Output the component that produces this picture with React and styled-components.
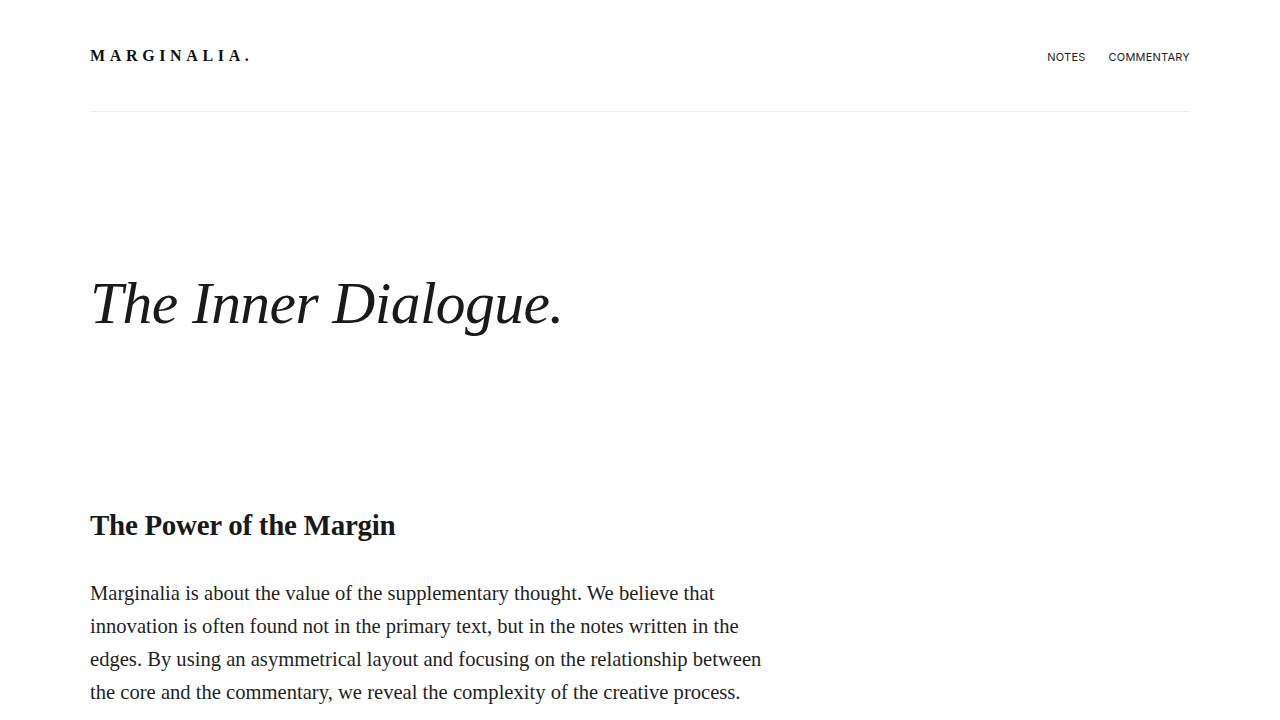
import React from 'react';
import styled, { createGlobalStyle } from 'styled-components';

const GlobalStyle = createGlobalStyle`
  html, body {
    margin: 0;
    padding: 0;
    background: #ffffff;
    color: #1a1a1a;
  }
  body {
    font-family: "Liberation Serif", "Times New Roman", serif;
  }
`;

const Page = styled.div`
  max-width: 1100px;
  margin: 0 auto;
`;

const Header = styled.header`
  display: flex;
  justify-content: space-between;
  align-items: center;
  height: 112px;
  border-bottom: 1px solid #eeeeee;
  box-sizing: border-box;
`;

const Logo = styled.div`
  font-family: "Liberation Serif", serif;
  font-weight: 700;
  font-size: 16px;
  letter-spacing: 0.29em;
  margin-top: 1px;
  color: #111;
`;

const Nav = styled.nav`
  display: flex;
  gap: 23px;
  margin-top: 3px;
`;

const NavLink = styled.a`
  font-family: Inter, "Liberation Sans", sans-serif;
  font-size: 11px;
  letter-spacing: 0.02em;
  text-transform: uppercase;
  color: #222;
  text-decoration: none;
`;

const Hero = styled.section`
  padding-top: 157px;
  padding-bottom: 170px;
`;

const Title = styled.h1`
  margin: 0;
  font-style: italic;
  font-weight: 400;
  font-size: 59.6px;
  line-height: 68px;
  letter-spacing: -0.01em;
  color: #1a1a1a;
`;

const Section = styled.section`
  max-width: 680px;
`;

const Heading = styled.h2`
  margin: 0 0 34px;
  font-weight: 700;
  font-size: 29px;
  line-height: 36px;
  letter-spacing: -0.01em;
  color: #1a1a1a;
`;

const Paragraph = styled.p`
  margin: 0;
  font-size: 20.6px;
  line-height: 33px;
  color: #1f1f1f;
`;

export default function App() {
  return (
    <>
      <GlobalStyle />
      <Page>
        <Header>
          <Logo>MARGINALIA.</Logo>
          <Nav>
            <NavLink href="#">Notes</NavLink>
            <NavLink href="#">Commentary</NavLink>
          </Nav>
        </Header>
        <Hero>
          <Title>The Inner Dialogue.</Title>
        </Hero>
        <Section>
          <Heading>The Power of the Margin</Heading>
          <Paragraph>
            Marginalia is about the value of the supplementary thought. We believe that
            innovation is often found not in the primary text, but in the notes written in the
            edges. By using an asymmetrical layout and focusing on the relationship between
            the core and the commentary, we reveal the complexity of the creative process.
          </Paragraph>
        </Section>
      </Page>
    </>
  );
}
